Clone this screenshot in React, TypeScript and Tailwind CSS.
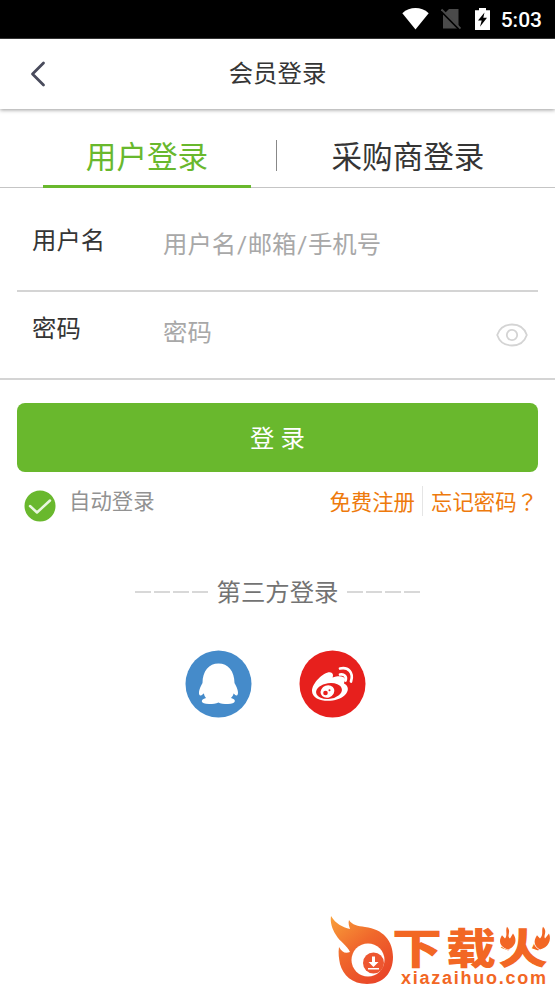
import React from "react";

function StatusBar() {
  return (
    <div className="flex h-[39px] items-center justify-end border-b border-[#3a3a3a] bg-black pr-[13px] text-white">
      <svg className="mr-3 h-[22px] w-[27px]" viewBox="0 0 27 22" fill="white">
        <path d="M0.3 5.2C8 -1.6 19 -1.6 26.7 5.2L13.5 21.5Z" />
      </svg>
      <svg className="mr-[14px] h-[22px] w-5" viewBox="0 0 20 22">
        <path d="M8 1H17.5V20.5H2V7Z" fill="#4a4a4a" />
        <path d="M0 2.5L19 21.5" stroke="#000" strokeWidth="3" />
        <path d="M0.5 1.5L19.5 20.5" stroke="#4a4a4a" strokeWidth="1.8" />
      </svg>
      <svg className="mr-[11px] h-[22px] w-[15px]" viewBox="0 0 15 22">
        <path d="M4 0H11V2.3H15V22H0V2.3H4Z" fill="white" />
        <path d="M9.5 4.5L3 12.5H6.7L5 18.8L12 9.8H8.3Z" fill="black" />
      </svg>
      <span className="pt-[2px] font-[Roboto,sans-serif] text-[21px] font-medium leading-6">5:03</span>
    </div>
  );
}

function Header() {
  return (
    <header className="relative grid h-[70px] shrink-0 grid-cols-[76px_1fr_76px] items-center bg-white shadow-[0_1px_4px_rgba(0,0,0,0.4)]">
      <svg className="ml-[30px] h-[26px] w-4" viewBox="0 0 16 26" fill="none" stroke="#494b5c" strokeWidth="2.8" strokeLinecap="round" strokeLinejoin="round">
        <path d="M13.5 2L2.5 13L13.5 24" />
      </svg>
      <h1 className="text-center text-[24.4px] leading-8">会员登录</h1>
    </header>
  );
}

function Tabs() {
  return (
    <nav className="flex h-[79px] shrink-0 items-end border-b border-[#c5c5c5] px-[43px]">
      <button className="-mb-px h-[48px] w-[208px] border-b-3 border-[#69b82d] pb-[9px] text-[30.6px] leading-9 text-[#69b82d]">用户登录</button>
      <span className="mb-4 ml-[25px] h-[31px] w-px bg-[#888]" />
      <button className="ml-[54.5px] h-[47px] whitespace-nowrap pb-[11px] text-[30.6px] leading-9">采购商登录</button>
    </nav>
  );
}

function LoginForm() {
  return (
    <form>
      <div className="mx-[17px] flex h-[104px] items-start border-b-2 border-[#d4d4d4] pl-[15px] pt-[35px]">
        <label className="w-[131px] text-[24.4px] leading-9">用户名</label>
        <span className="pt-1 text-[24.4px] leading-9 text-[#a8a8a8]">用户名<span className="px-[0.7px]">/</span>邮箱<span className="px-[0.7px]">/</span>手机号</span>
      </div>
      <div className="flex h-[88px] items-start border-b-2 border-[#d4d4d4] pl-8 pr-[27px] pt-[19px]">
        <label className="w-[131px] text-[24.4px] leading-9">密码</label>
        <span className="pt-1 text-[24.4px] leading-9 text-[#a8a8a8]">密码</span>
        <svg className="ml-auto mt-3 h-6 w-8" viewBox="0 0 32 24" fill="none" stroke="#d4d4d4" strokeWidth="1.8">
          <path d="M1.2 12C3.5 5 9 1.5 16 1.5S28.5 5 30.8 12C28.5 19 23 22.5 16 22.5S3.5 19 1.2 12Z" />
          <circle cx="16" cy="12" r="5.2" />
        </svg>
      </div>
      <button type="button" className="mx-[17px] mt-[23px] block h-[69px] w-[521px] rounded-lg bg-[#69b82d] pt-0.5 text-[24.4px] leading-9 text-white">登 录</button>
    </form>
  );
}

function Options() {
  return (
    <div className="flex h-[50px] items-start pl-6 pr-[17px] pt-[14px] text-[21.4px] leading-8">
      <svg className="mt-1 h-8 w-8" viewBox="0 0 32 32" fill="none">
        <circle cx="16" cy="16" r="15.5" fill="#69b82d" />
        <path d="M6 16L13 22.5L26 10.5" stroke="#e9f7df" strokeWidth="2.5" strokeLinecap="round" strokeLinejoin="round" />
      </svg>
      <span className="ml-[13px] text-[#929292]">自动登录</span>
      <a className="ml-auto mt-px text-[#ee7a0c]">免费注册</a>
      <span className="ml-[7px] h-[30px] w-px bg-[#e5e5e5]" />
      <a className="ml-2 mt-px text-[#ee7a0c]">忘记密码<span className="font-['Noto_Sans_CJK_TC',sans-serif] leading-none" lang="zh-TW">？</span></a>
    </div>
  );
}

function Dashes() {
  return (
    <span className="flex gap-[3px]">
      <i className="h-0.5 w-4 bg-[#d8d8d8]" />
      <i className="h-0.5 w-4 bg-[#d8d8d8]" />
      <i className="h-0.5 w-4 bg-[#d8d8d8]" />
      <i className="h-0.5 w-4 bg-[#d8d8d8]" />
    </span>
  );
}

function ThirdParty() {
  return (
    <section className="pt-[51px]">
      <div className="flex items-center justify-center gap-[9px] text-[24.4px] leading-9 text-[#737373]">
        <Dashes />
        <span className="pt-0.5">第三方登录</span>
        <Dashes />
      </div>
      <div className="mt-[39px] flex gap-[47px] pl-[185px]">
        <svg className="h-[68px] w-[67px]" viewBox="0 0 67 68">
          <ellipse cx="33.5" cy="34" rx="33" ry="33.5" fill="#458bca" />
          <path d="M17.5 33C17.5 21 24 13.5 33.5 13.5S49.5 21 49.5 33C53 39 54 44 52 45.5C50.5 46 49 43.5 48.5 43.5C48.5 45 47 47 46 48C52 49.5 51 54 43 54C39 54 35 53.5 33.5 52.5C31 54 28 54 24 54C15 54 15 49.5 21 48C20 47 19 45 19 43.5C18 43.5 17 46 15 45.5C13 44 14 39 17.5 33Z" fill="white" />
        </svg>
        <svg className="h-[68px] w-[67px]" viewBox="0 0 67 68">
          <ellipse cx="33.5" cy="34" rx="33" ry="33.5" fill="#e7201d" />
          <path d="M13 41C13 32 28 19 33 23C34.5 24.5 34 26 33.5 27.5C39 25.5 45 25.5 46 29C46 31 45 32 45 33.5C50 36 50 41 46 45C38 53.5 13 53 13 41Z" fill="white" />
          <ellipse cx="30" cy="41" rx="13" ry="7.8" transform="rotate(-8 30 41)" fill="#e7201d" />
          <ellipse cx="28.5" cy="41.5" rx="7" ry="6" transform="rotate(-20 28.5 41.5)" fill="white" />
          <circle cx="26.5" cy="43" r="2.3" fill="#e7201d" />
          <circle cx="30.5" cy="40.2" r="1" fill="#e7201d" />
          <path d="M41 18.5C49 16.5 55 22.5 52 31.5M41 24.5C45 23.5 48 26.5 46.5 30.5" fill="none" stroke="white" strokeWidth="2.7" strokeLinecap="round" />
        </svg>
      </div>
    </section>
  );
}

function Watermark() {
  return (
    <footer className="mt-auto flex h-[74px] items-start pl-[329px]">
      <svg className="h-[72px] w-[65px] shrink-0" viewBox="0 0 65 72">
        <defs>
          <linearGradient id="flame" x1="0" y1="0" x2="0.7" y2="1">
            <stop offset="0" stopColor="#f9a13a" />
            <stop offset="0.5" stopColor="#f0682c" />
            <stop offset="1" stopColor="#e94628" />
          </linearGradient>
        </defs>
        <path d="M2 2C7 10 13 13 21 15C20 12 19 9 20 6C23 11 29 12 36 13C54 15 64 27 64 43C64 59 54 70 38 70C23 70 14 61 11 50C10 45 9 39 10 33C13 38 16 40 21 38C18 31 11 28 7 21C3 15 1 8 2 2Z" fill="url(#flame)" />
        <circle cx="39" cy="46" r="16.5" fill="white" />
        <circle cx="44.5" cy="49" r="10.5" fill="#ed5630" />
        <path d="M43 42.5H46V48H49.5L44.5 53L39.5 48H43ZM39 54H50V55.5H39Z" fill="white" />
      </svg>
      <div className="flex flex-col text-[#f26724]">
        <span className="mt-3 flex h-[44px] origin-top scale-y-[0.84] whitespace-nowrap font-['Noto_Sans_CJK_SC',sans-serif] text-[50px] font-black leading-[46px] tracking-[4px]">
          <span className="-ml-0.5">下载</span>
          <span className="relative -ml-0.5">
            火
            <svg className="absolute left-0 top-0 h-[50px] w-[56px]" viewBox="0 0 56 50" fill="#f26724" stroke="white" strokeWidth="1.5" paintOrder="stroke">
              <path d="M9 1C14 7 8 11 12 15L15 9C20 17 17 25 10 28C2 25 0 18 4 11L7 15C10 10 7 6 9 1Z" />
              <path d="M45 1C50 7 45 11 47 15L51 9C54 17 50 26 42 28C36 24 35 18 39 11L42 15C46 10 43 6 45 1Z" />
            </svg>
          </span>
        </span>
        <span className="ml-[7px] font-['Liberation_Sans',sans-serif] text-[18px] font-bold leading-4 tracking-[1.75px]">xiazaihuo.com</span>
      </div>
    </footer>
  );
}

export default function App() {
  return (
    <main className="flex h-[988px] w-[555px] flex-col overflow-hidden bg-white font-[Roboto,'Noto_Sans_CJK_SC',sans-serif] text-[#353535]">
      <StatusBar />
      <Header />
      <Tabs />
      <LoginForm />
      <Options />
      <ThirdParty />
      <Watermark />
    </main>
  );
}
